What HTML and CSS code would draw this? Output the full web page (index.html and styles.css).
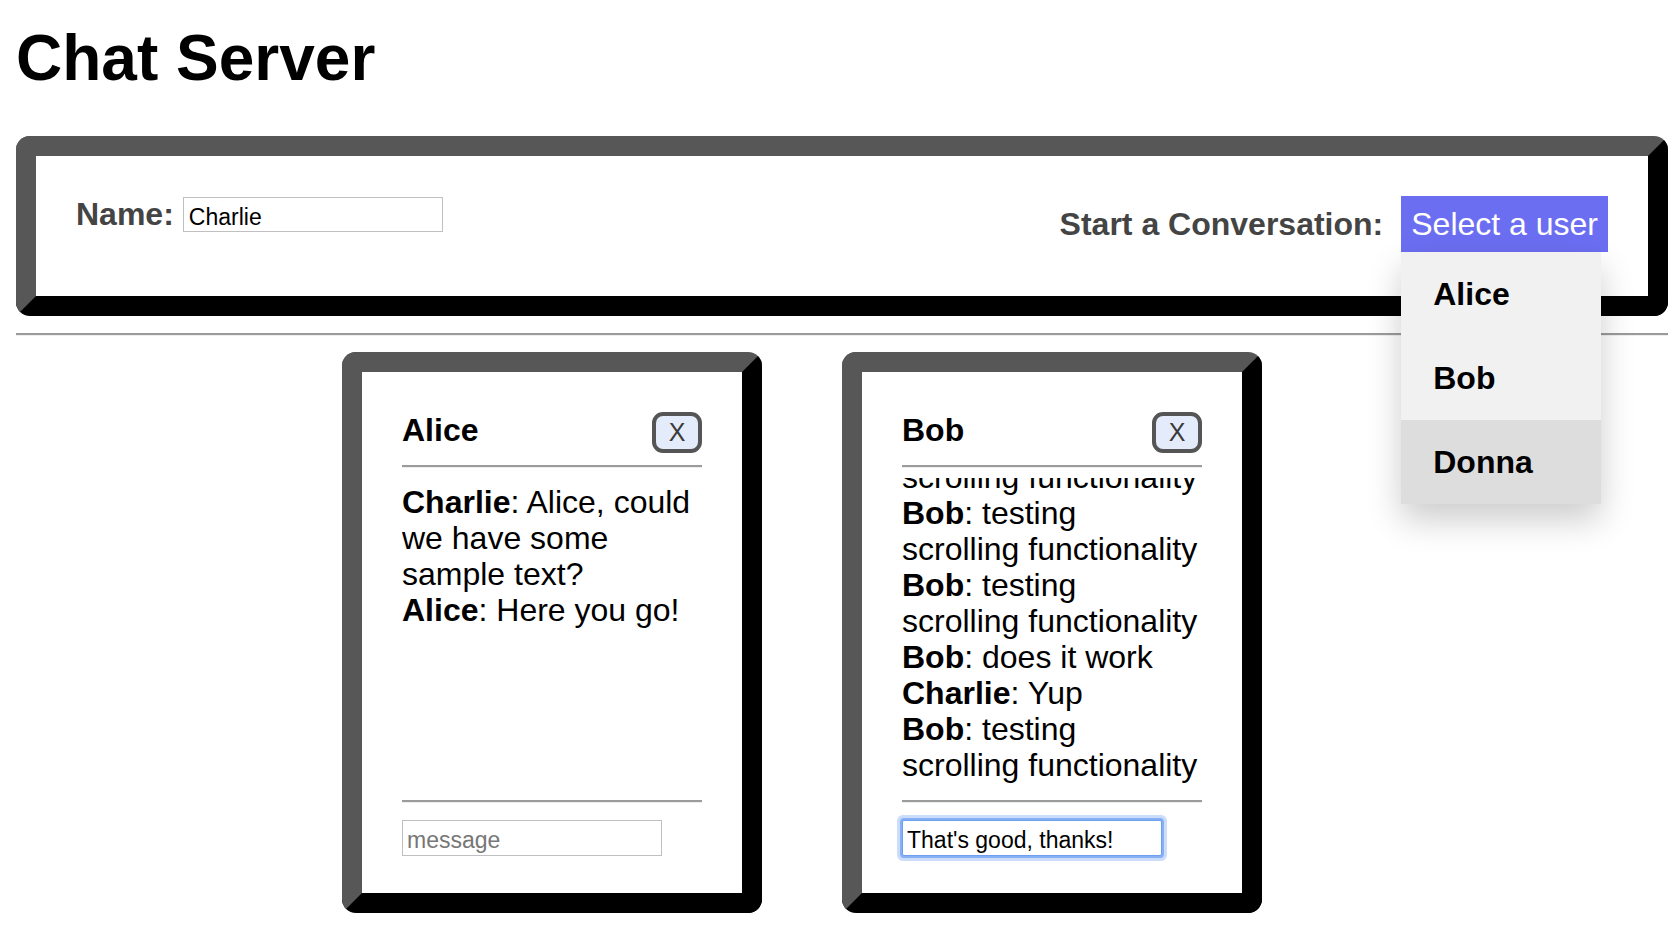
FILE: index.html
```html
<!DOCTYPE html>
<html lang="en">
<head>
<meta charset="utf-8">
<title>Chat Server</title>
<link rel="stylesheet" href="styles.css">
</head>
<body>
<h1 class="title">Chat Server</h1>
<div class="topbar">
  <div class="name-group">
    <label class="label" for="name">Name:</label>
    <input id="name" class="name-input" type="text" value="Charlie">
  </div>
  <div class="start-group">
    <span class="label">Start a Conversation:</span>
    <div class="dropdown">
      <button class="dropbtn" type="button">Select a user</button>
      <div class="menu">
        <div class="menu-item">Alice</div>
        <div class="menu-item">Bob</div>
        <div class="menu-item hover">Donna</div>
      </div>
    </div>
  </div>
</div>
<hr class="rule">
<div class="chats">
  <div class="chat">
    <div class="chat-head">
      <span class="chat-name">Alice</span>
      <button class="close" type="button">X</button>
    </div>
    <hr class="chat-rule">
    <div class="messages">
      <div class="msg"><b>Charlie</b>: Alice, could we have some sample text?</div>
      <div class="msg"><b>Alice</b>: Here you go!</div>
    </div>
    <hr class="chat-rule bottom">
    <input class="msg-input" type="text" placeholder="message">
  </div>
  <div class="chat">
    <div class="chat-head">
      <span class="chat-name">Bob</span>
      <button class="close" type="button">X</button>
    </div>
    <hr class="chat-rule">
    <div class="messages scrolled">
      <div class="msg"><b>Bob</b>: hi Charlie</div>
      <div class="msg"><b>Charlie</b>: hey Bob</div>
      <div class="msg"><b>Bob</b>: testing scrolling functionality</div>
      <div class="msg"><b>Bob</b>: testing scrolling functionality</div>
      <div class="msg"><b>Bob</b>: testing scrolling functionality</div>
      <div class="msg"><b>Bob</b>: does it work</div>
      <div class="msg"><b>Charlie</b>: Yup</div>
      <div class="msg"><b>Bob</b>: testing scrolling functionality</div>
    </div>
    <hr class="chat-rule bottom">
    <input class="msg-input focused" type="text" value="That's good, thanks!">
  </div>
</div>
</body>
</html>
```
FILE: styles.css
```css
html, body {
  background: #fff;
}
body {
  margin: 16px 12px 16px 16px;
  font-family: "Liberation Sans", Arial, Helvetica, sans-serif;
  color: #000;
}
.title {
  margin: 5px 0 41px;
  font-size: 64px;
  line-height: 74px;
  font-weight: bold;
}
.topbar {
  box-sizing: border-box;
  height: 180px;
  border: 20px solid;
  border-color: #575757 #000 #000 #575757;
  border-radius: 14px;
  padding: 40px 40px 0;
  display: flex;
  justify-content: space-between;
  align-items: flex-start;
}
.label {
  font-size: 32px;
  line-height: 36px;
  font-weight: bold;
  color: #444;
}
.name-group {
  display: flex;
  align-items: flex-start;
}
.name-input {
  box-sizing: border-box;
  margin: 1px 0 0 9px;
  width: 260px;
  height: 35px;
  padding: 6px 5px 0;
  border: 1px solid #c0c0c0;
  border-radius: 0;
  font-family: "Liberation Sans", Arial, sans-serif;
  font-size: 23px;
  color: #000;
  outline: none;
}
.start-group {
  display: flex;
  align-items: baseline;
  gap: 18px;
}
.dropdown {
  position: relative;
}
.dropbtn {
  display: block;
  margin: 0;
  border: 0;
  padding: 10px 10px;
  background: #6c6ef2;
  color: #fff;
  font-family: "Liberation Sans", Arial, sans-serif;
  font-size: 32px;
  line-height: 36px;
  cursor: pointer;
}
.menu {
  position: absolute;
  top: 100%;
  left: 0;
  width: 200px;
  background: #f1f1f1;
  box-shadow: 0 16px 32px rgba(0, 0, 0, 0.2);
  z-index: 5;
}
.menu-item {
  padding: 24px 32px;
  font-size: 32px;
  line-height: 36px;
  font-weight: bold;
  color: #000;
}
.menu-item.hover {
  background: #ddd;
}
.rule {
  margin: 17px 0 16px;
  height: 0;
  border: 0;
  border-top: 2px solid #9b9b9b;
  border-bottom: 1px solid #eee;
}
.chats {
  display: flex;
  justify-content: center;
}
.chat {
  box-sizing: border-box;
  width: 420px;
  height: 561px;
  margin-right: 80px;
  border: 20px solid;
  border-color: #575757 #000 #000 #575757;
  border-radius: 14px;
  padding: 40px 40px 35px;
  display: flex;
  flex-direction: column;
}
.chat-head {
  display: flex;
  justify-content: space-between;
  align-items: flex-start;
  height: 41px;
}
.chat-name {
  font-size: 32px;
  line-height: 36px;
  font-weight: bold;
}
.close {
  box-sizing: border-box;
  width: 50px;
  height: 41px;
  margin: 0;
  padding: 0;
  border: 4px solid #555;
  border-radius: 11px;
  background: #e4ecfb;
  color: #3a3a3a;
  font-family: "Liberation Sans", Arial, sans-serif;
  font-size: 25px;
  line-height: 33px;
}
.chat-rule {
  margin: 12px 0 10px;
  height: 0;
  border: 0;
  border-top: 2px solid #9b9b9b;
  border-bottom: 1px solid #eee;
}
.chat-rule.bottom {
  margin: 10px 0 17px;
}
.messages {
  box-sizing: border-box;
  height: 312px;
  flex-shrink: 0;
  overflow: hidden;
  padding: 6px 2px 7px 0;
  display: flex;
  flex-direction: column;
  justify-content: flex-start;
  font-size: 32px;
  line-height: 36px;
}
.messages.scrolled {
  justify-content: flex-end;
}
.msg {
  flex-shrink: 0;
}
.msg-input {
  box-sizing: border-box;
  width: 260px;
  height: 36px;
  margin: 0;
  padding: 4px 4px 0;
  border: 1px solid #c0c0c0;
  border-radius: 0;
  font-family: "Liberation Sans", Arial, sans-serif;
  font-size: 23px;
  color: #000;
  outline: none;
}
.msg-input::placeholder {
  color: #777;
}
.msg-input.focused {
  border-color: #6c9ff0;
  border-radius: 2px;
  box-shadow: 0 0 0 2px #86b0f3, 0 0 0 5px rgba(140, 180, 245, 0.45);
}
```
